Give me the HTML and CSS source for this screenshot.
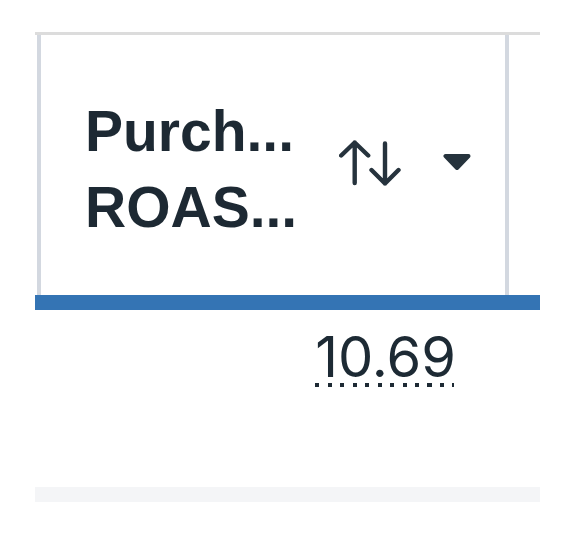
FILE: index.html
```html
<!DOCTYPE html>
<html lang="en">
<head>
<meta charset="utf-8">
<title>Purchase ROAS column</title>
<link rel="stylesheet" href="styles.css">
</head>
<body>
  <div class="grid">
    <div class="head-row">
      <div class="edge"></div>
      <div class="head-cell">
        <div class="label">
          <span class="line">Purch...</span>
          <span class="line">ROAS...</span>
        </div>
        <svg class="sort-icon" width="62" height="46" viewBox="0 0 62 46" aria-hidden="true">
          <path d="M15.7 43V2.5M2.2 15.5L15.7 2.5L29.2 15.5" />
          <path d="M46 3.5V43.5M32.5 30L46 43.5L59.5 30" />
        </svg>
        <svg class="menu-caret" width="28" height="18" viewBox="0 0 28 18" aria-hidden="true">
          <path d="M2.5 3H25.5L14 15Z" />
        </svg>
      </div>
      <div class="next-col"></div>
    </div>
    <div class="sel-bar"></div>
    <div class="data-row">
      <div class="data-cell">
        <span class="metric">10.69</span>
      </div>
    </div>
    <div class="foot-strip"></div>
  </div>
</body>
</html>
```

FILE: styles.css
```css
html, body {
  margin: 0;
  padding: 0;
  background: #ffffff;
}

body {
  font-family: "Liberation Sans", Arial, sans-serif;
  color: #1d2933;
}

.grid {
  margin: 32px 0 0 35px;
  width: 505px;
}

/* header row */
.head-row {
  display: flex;
  border-top: 3px solid #dcdcdc;
  height: 260px;
}

.edge {
  flex: 0 0 2px;
}

.head-cell {
  flex: 0 0 auto;
  width: 464px;
  border-left: 4px solid #d3d8e0;
  border-right: 4px solid #d3d8e0;
  display: flex;
  align-items: center;
}

.label {
  display: flex;
  flex-direction: column;
  width: 254px;
  padding: 8px 0 0 44px;
  font-size: 57px;
  font-weight: 700;
  line-height: 76px;
  white-space: nowrap;
}

.sort-icon {
  display: block;
  margin-bottom: 5px;
}

.sort-icon path {
  fill: none;
  stroke: #26333d;
  stroke-width: 4.4;
  stroke-linecap: round;
  stroke-linejoin: round;
}

.menu-caret {
  display: block;
  margin-left: 42px;
  margin-bottom: 7px;
}

.menu-caret path {
  fill: #26333d;
  stroke: #26333d;
  stroke-width: 4;
  stroke-linejoin: round;
}

.next-col {
  flex: 1 1 auto;
}

/* selection bar under the header */
.sel-bar {
  height: 15px;
  background: #3474b4;
}

/* data row */
.data-row {
  display: flex;
  height: 177px;
}

.data-cell {
  width: 421px;
  padding: 17px 51px 0 0;
  text-align: right;
  line-height: 60px;
}

.metric {
  display: inline-block;
  vertical-align: top;
  font-family: Inter, "Liberation Sans", sans-serif;
  font-size: 56px;
  font-weight: 400;
  line-height: 60px;
  color: #1d2a34;
  background-image: repeating-linear-gradient(to right, #1d2a34 0 4px, transparent 4px 12.5px);
  background-size: calc(100% - 2px) 4px;
  background-position: 0 100%;
  background-repeat: no-repeat;
}

.foot-strip {
  height: 15px;
  background: #f4f5f7;
}
```
